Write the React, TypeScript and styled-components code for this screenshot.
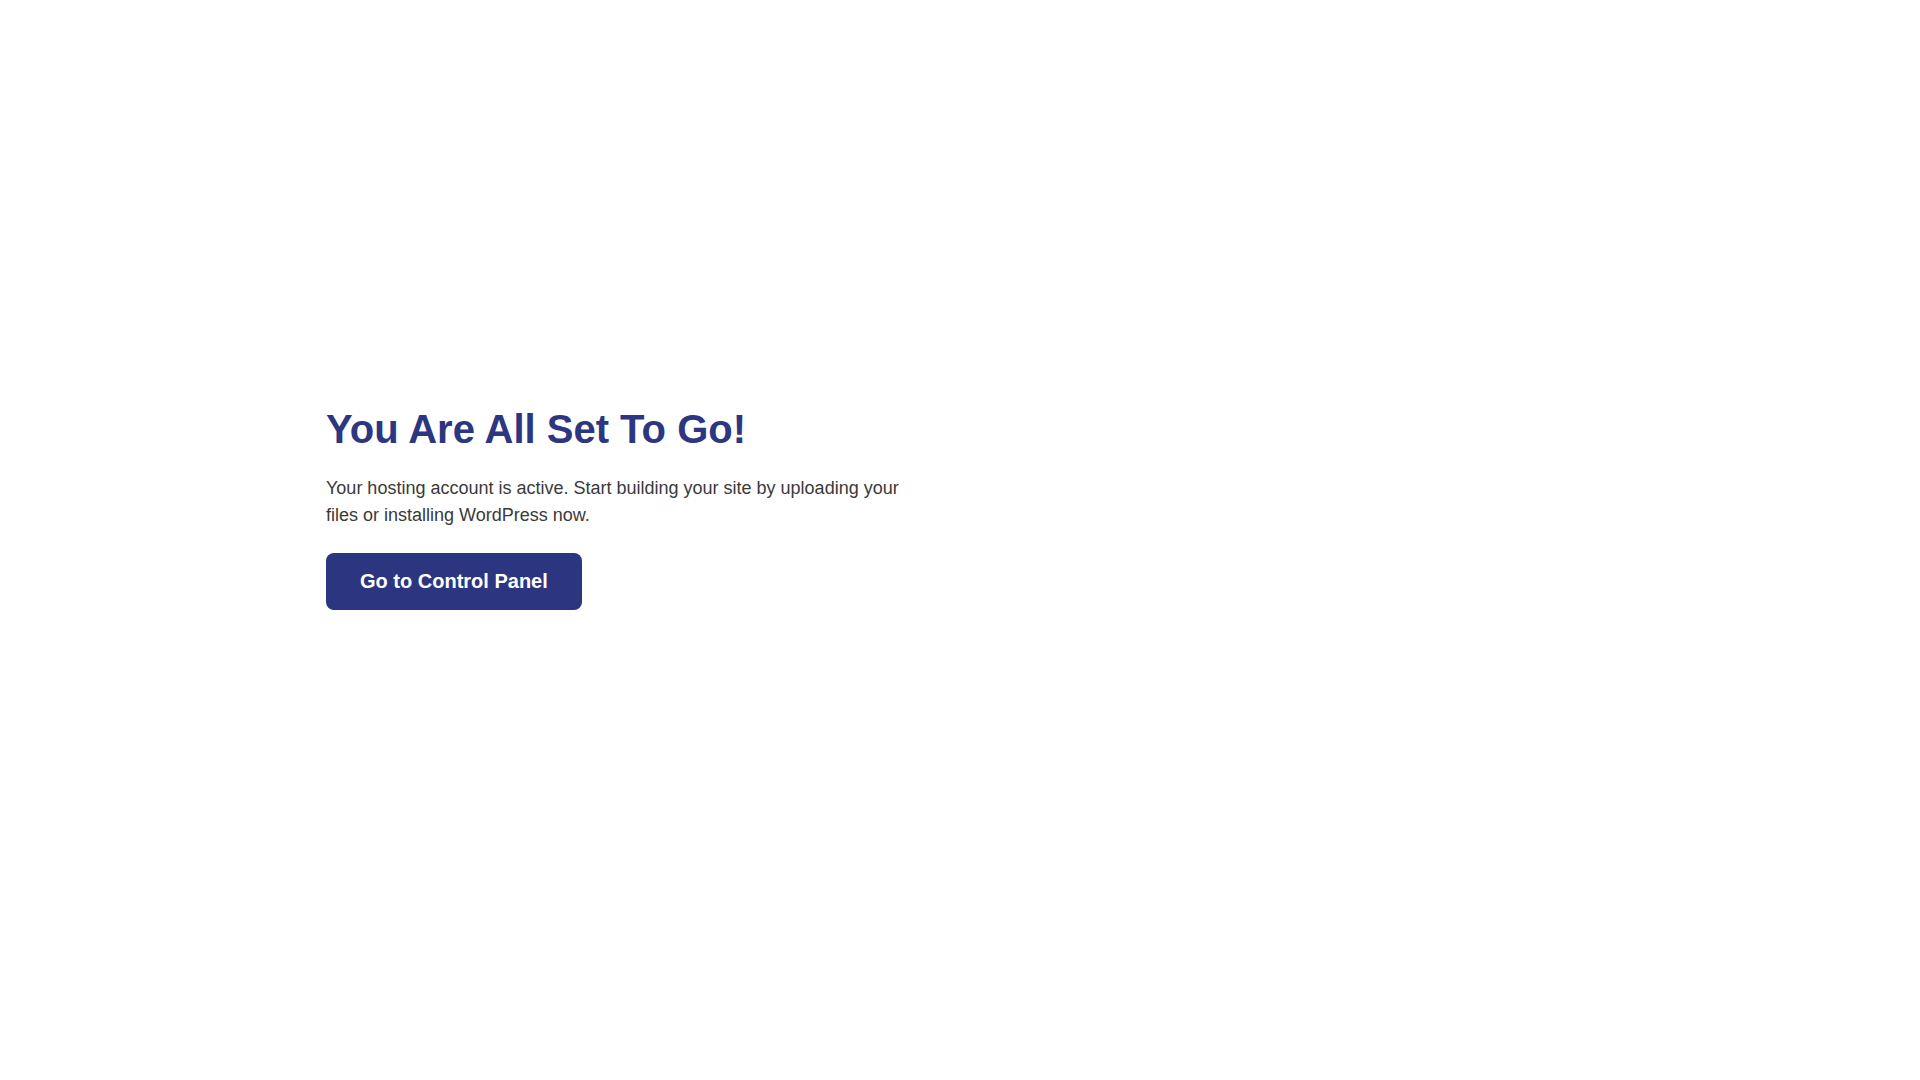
import * as React from "react";
import styled, {createGlobalStyle} from "styled-components";

const GlobalStyle = createGlobalStyle`
  html, body {
    margin: 0;
    padding: 0;
    background: #ffffff;
    font-family: "Liberation Sans", Arial, sans-serif;
  }
`;

const Page = styled.main`
  display: flex;
  align-items: center;
  min-height: calc(100vh - 66px);
  box-sizing: border-box;
`;

const Container = styled.div`
  width: 100%;
  max-width: 1268px;
  margin: 0 auto;
`;

const Content = styled.div`
  max-width: 600px;
`;

const Title = styled.h1`
  margin: 0 0 22px;
  font-size: 40px;
  line-height: 1.2;
  font-weight: 700;
  color: #2c3681;
`;

const Lead = styled.p`
  margin: 0 0 24px;
  font-size: 18px;
  line-height: 27px;
  color: #3a3a3a;
`;

const Button = styled.a`
  display: inline-block;
  padding: 16px 34px;
  font-size: 20px;
  line-height: 25px;
  font-weight: 700;
  color: #ffffff;
  background: #2c3580;
  border-radius: 8px;
  text-decoration: none;
  cursor: pointer;
`;

export default function App() {
  return (
    <>
      <GlobalStyle/>
      <Page>
        <Container>
          <Content>
            <Title>You Are All Set To Go!</Title>
            <Lead>
              Your hosting account is active. Start building your site by uploading your files or installing WordPress now.
            </Lead>
            <Button href="#">Go to Control Panel</Button>
          </Content>
        </Container>
      </Page>
    </>
  );
}
